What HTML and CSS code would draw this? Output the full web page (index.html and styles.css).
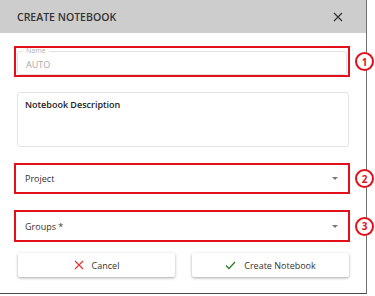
FILE: index.html
```html
<!DOCTYPE html>
<html lang="en">
<head>
  <meta charset="UTF-8">
  <meta name="viewport" content="width=device-width, initial-scale=1.0">
  <title>Create Notebook</title>
  <link rel="stylesheet" href="styles.css">
</head>
<body>

  <div class="dialog">
    <div class="dialog-header">
      <span class="dialog-title">CREATE NOTEBOOK</span>
      <svg class="close-icon" width="10" height="10" viewBox="0 0 10 10">
        <path d="M1 1 L9 9 M9 1 L1 9" stroke="#333" stroke-width="1.2" fill="none"/>
      </svg>
    </div>

    <div class="dialog-body">
      <!-- Name -->
      <div class="row row-name">
        <div class="mark-box">
          <fieldset class="outlined">
            <legend>Name</legend>
            <span class="value-muted">AUTO</span>
          </fieldset>
        </div>
        <span class="step">1</span>
      </div>

      <!-- Description -->
      <div class="row row-desc">
        <div class="textarea-box">Notebook Description</div>
      </div>

      <!-- Project -->
      <div class="row row-project">
        <div class="mark-box">
          <div class="select">
            <span>Project</span>
            <span class="caret"></span>
          </div>
        </div>
        <span class="step">2</span>
      </div>

      <!-- Groups -->
      <div class="row row-groups">
        <div class="mark-box">
          <div class="select">
            <span>Groups *</span>
            <span class="caret"></span>
          </div>
        </div>
        <span class="step">3</span>
      </div>

      <div class="actions">
        <button class="btn">
          <svg width="10" height="10" viewBox="0 0 10 10">
            <path d="M1 1 L9 9 M9 1 L1 9" stroke="#e53935" stroke-width="1.3" fill="none"/>
          </svg>
          Cancel
        </button>
        <button class="btn">
          <svg width="11" height="9" viewBox="0 0 11 9">
            <path d="M1 4.5 L4 7.5 L10 1" stroke="#2e7d32" stroke-width="1.3" fill="none"/>
          </svg>
          Create Notebook
        </button>
      </div>
    </div>
  </div>

</body>
</html>
```

FILE: styles.css
```css
body {
  margin: 0;
  background-color: #ffffff;
  font-family: "Open Sans", "Noto Sans", sans-serif;
  color: #333;
}

.dialog {
  width: 367px;
  height: 294px;
  border-right: 1px solid #6f6f6f;
  border-bottom: 1px solid #4a4a4a;
  background-color: #fff;
  box-sizing: border-box;
}

.dialog-header {
  height: 33px;
  background-color: #cdcdcd;
  display: flex;
  align-items: center;
  justify-content: space-between;
  padding: 0 23px 0 17px;
}

.dialog-title {
  font-size: 10.5px;
  font-weight: 600;
  color: #333;
}

.dialog-body {
  padding: 13px 0 0 14px;
}

.row {
  display: flex;
  align-items: center;
}

.row-desc {
  margin-top: 15px;
}

.row-project {
  margin-top: 16px;
}

.row-groups {
  margin-top: 16px;
}

/* red annotation frame */
.mark-box {
  flex-shrink: 0;
  width: 336px;
  height: 31px;
  border: 2px solid #e3101a;
  box-sizing: border-box;
}

.row-groups .mark-box {
  height: 32px;
}

.step {
  flex-shrink: 0;
  width: 19px;
  height: 19px;
  margin-left: 5px;
  border: 2px solid #e3101a;
  border-radius: 50%;
  background-color: #fff;
  color: #e3101a;
  font-size: 10px;
  font-weight: 700;
  display: flex;
  align-items: center;
  justify-content: center;
  box-sizing: border-box;
}

.outlined {
  margin: 0 1px;
  padding: 0 8px;
  height: 27px;
  border: 1px solid #e2e2e2;
  border-radius: 3px;
  box-sizing: border-box;
}

.outlined legend {
  font-size: 7px;
  line-height: 6px;
  color: #b0b0b0;
  padding: 0 3px;
  margin-left: -3px;
}

.value-muted {
  display: block;
  font-size: 9px;
  color: #a8a8a8;
  margin-top: 4px;
}

.textarea-box {
  flex-shrink: 0;
  margin-left: 3px;
  width: 332px;
  height: 55px;
  border: 1px solid #e4e4e4;
  border-radius: 3px;
  box-sizing: border-box;
  padding: 5px 7px;
  font-size: 9px;
  font-weight: 600;
  color: #222;
}

.select {
  height: 100%;
  display: flex;
  align-items: center;
  justify-content: space-between;
  padding: 0 10px 0 9px;
  font-size: 9px;
  color: #333;
}

.caret {
  width: 0;
  height: 0;
  border-left: 3px solid transparent;
  border-right: 3px solid transparent;
  border-top: 3px solid #777;
}

.actions {
  display: flex;
  gap: 17px;
  margin: 11px 0 0 4px;
}

.btn {
  width: 157px;
  height: 24px;
  border: none;
  border-radius: 2px;
  background-color: #fff;
  box-shadow: 0 1px 3px rgba(0, 0, 0, 0.35);
  font-family: "Open Sans", "Noto Sans", sans-serif;
  font-size: 9px;
  color: #333;
  display: flex;
  align-items: center;
  justify-content: center;
  gap: 8px;
  padding: 0;
}
```
